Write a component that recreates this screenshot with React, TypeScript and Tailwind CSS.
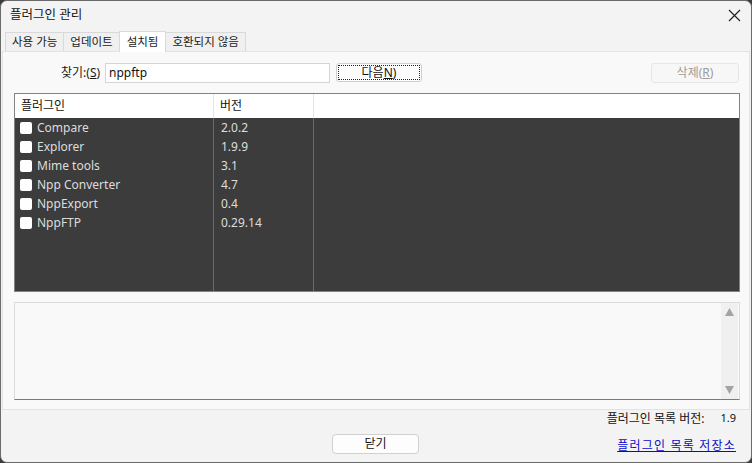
import React from "react";

const KR = { fontFamily: '"Noto Sans", "Noto Sans CJK KR", sans-serif' };

type Plugin = { name: string; version: string };

const plugins: Plugin[] = [
  { name: "Compare", version: "2.0.2" },
  { name: "Explorer", version: "1.9.9" },
  { name: "Mime tools", version: "3.1" },
  { name: "Npp Converter", version: "4.7" },
  { name: "NppExport", version: "0.4" },
  { name: "NppFTP", version: "0.29.14" },
];

const tabs = ["사용 가능", "업데이트", "설치됨", "호환되지 않음"];

function Tab({ label, active }: { label: string; active: boolean }) {
  if (active) {
    return (
      <div className="h-[21px] px-[7px] -ml-px bg-white border border-[#d9d9d9] border-b-0 -mb-px flex items-center text-[11.5px] text-[#1a1a1a] relative z-10">
        {label}
      </div>
    );
  }
  return (
    <div className="h-[19px] px-[6px] bg-[#f0f0f0] border border-[#d9d9d9] border-b-0 -ml-px first:ml-0 flex items-center text-[11.5px] text-[#1a1a1a]">
      {label}
    </div>
  );
}

function Row({ p }: { p: Plugin }) {
  return (
    <div className="flex h-[19px] items-center text-[12px] text-[#dcdcdc]">
      <div className="w-[199px] flex items-center pl-[5px]">
        <span className="w-[12px] h-[12px] rounded-[2px] bg-white mr-[5px]" />
        <span>{p.name}</span>
      </div>
      <div className="w-[100px] pl-[7px]">{p.version}</div>
    </div>
  );
}

export default function App() {
  return (
    <div className="w-[752px] h-[463px] bg-[#3b3b3b]" style={KR}>
      <div className="w-full h-full bg-[#f3f3f3] rounded-[7px] border border-[#6b6b6b] flex flex-col overflow-hidden">
        {/* title bar */}
        <div className="h-[29px] flex items-center justify-between pl-[9px] pr-[8px]">
          <span className="text-[12.5px] text-[#111]">플러그인 관리</span>
          <svg width="13" height="13" viewBox="0 0 13 13" className="mr-[2px]">
            <path d="M1 1L12 12M12 1L1 12" stroke="#222" strokeWidth="1.2" />
          </svg>
        </div>

        {/* tabs */}
        <div className="flex items-end pl-[4px] h-[21px]">
          {tabs.map((t) => (
            <Tab key={t} label={t} active={t === "설치됨"} />
          ))}
        </div>

        {/* panel */}
        <div className="h-[359px] mx-[1px] bg-[#f9f9f9] border border-[#e3e3e3] flex flex-col px-[11px]">
          <div className="flex items-center h-[40px] pt-[1px]">
            <span className="ml-[47px] w-[44px] text-[12px] text-[#1a1a1a]">
              찾기:(<span className="underline">S</span>)
            </span>
            <div className="w-[225px] h-[20px] bg-white border border-[#d4d4d4] flex items-center px-[3px] text-[12px] text-[#111]">
              nppftp
            </div>
            <div className="ml-[6px] w-[86px] h-[19px] bg-[#fdfdfd] rounded-[3px] border border-[#cfcfcf] p-[1px]">
              <div className="w-full h-full border border-dotted border-[#222] flex items-center justify-center text-[12px] text-[#111]">
                다음<span className="underline">N</span>)
              </div>
            </div>
            <div className="ml-auto mr-[-1px] w-[88px] h-[20px] rounded-[3px] border border-[#e6e6e6] bg-[#f7f7f7] flex items-center justify-center text-[12px] text-[#9d9d9d]">
              삭제(<span className="underline">R</span>)
            </div>
          </div>

          {/* list */}
          <div className="mt-[1px] w-[726px] h-[199px] border border-[#828282] bg-[#3c3c3c] flex flex-col relative">
            <div className="h-[24px] bg-white flex text-[12px] text-[#111] shrink-0">
              <div className="w-[199px] pl-[6px] flex items-center border-r border-[#e5e5e5]">플러그인</div>
              <div className="w-[100px] pl-[6px] flex items-center border-r border-[#e5e5e5]">버전</div>
            </div>
            <div className="flex-1 relative">
              <div className="absolute left-[198px] top-0 bottom-0 w-px bg-[#6a6a6a]" />
              <div className="absolute left-[298px] top-0 bottom-0 w-px bg-[#6a6a6a]" />
              {plugins.map((p) => (
                <Row key={p.name} p={p} />
              ))}
            </div>
          </div>

          {/* description */}
          <div className="mt-[10px] w-[726px] h-[98px] bg-[#f9f9f9] border border-[#dcdcdc] border-b-[#7a7a7a] flex justify-end">
            <div className="w-[17px] h-full bg-[#f0f0f0] flex flex-col items-center justify-between py-[5px] mr-[1px]">
              <svg width="9" height="8" viewBox="0 0 9 8">
                <path d="M4.5 0L9 8H0Z" fill="#a3a3a3" />
              </svg>
              <svg width="9" height="8" viewBox="0 0 9 8">
                <path d="M0 0H9L4.5 8Z" fill="#a3a3a3" />
              </svg>
            </div>
          </div>
        </div>

        {/* bottom */}
        <div className="flex-1 relative px-[14px]">
          <div className="flex justify-end items-center h-[17px] text-[12px] text-[#111]">
            <span>플러그인 목록 버전:</span>
            <span className="ml-[16px] mr-[1px] text-[11px]">1.9</span>
          </div>
          <div className="flex items-center h-[33px]">
            <div className="ml-[317px] w-[87px] h-[20px] rounded-[4px] border border-[#d0d0d0] bg-[#fdfdfd] flex items-center justify-center text-[12px] text-[#111]">
              닫기
            </div>
            <span className="ml-auto mr-[1px] text-[12px] tracking-[1.2px] text-[#0a0ac8] underline mt-[4px]">플러그인 목록 저장소</span>
          </div>
        </div>
      </div>
    </div>
  );
}
